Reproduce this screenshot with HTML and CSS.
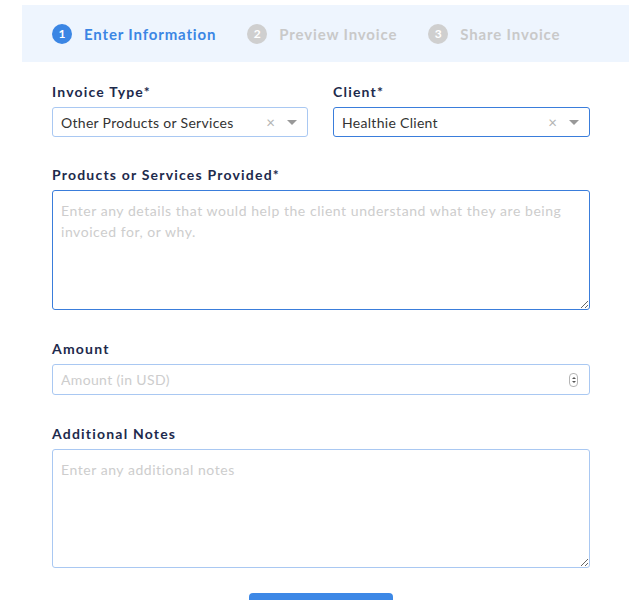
FILE: index.html
```html
<!DOCTYPE html>
<html>
<head>
<meta charset="utf-8">
<link rel="stylesheet" href="styles.css">
</head>
<body>
<div class="steps">
  <div class="step active"><span class="num">1</span><span class="step-label">Enter Information</span></div>
  <div class="step"><span class="num">2</span><span class="step-label">Preview Invoice</span></div>
  <div class="step"><span class="num">3</span><span class="step-label">Share Invoice</span></div>
</div>
<form class="form">
  <div class="row">
    <div class="field">
      <label class="label">Invoice Type*</label>
      <div class="select">
        <span class="select-value">Other Products or Services</span>
        <span class="clear">×</span>
        <span class="caret"></span>
      </div>
    </div>
    <div class="field">
      <label class="label">Client*</label>
      <div class="select focused">
        <span class="select-value">Healthie Client</span>
        <span class="clear">×</span>
        <span class="caret"></span>
      </div>
    </div>
  </div>
  <div class="field gap">
    <label class="label">Products or Services Provided*</label>
    <textarea class="textarea focused tall" placeholder="Enter any details that would help the client understand what they are being invoiced for, or why."></textarea>
  </div>
  <div class="field gap2">
    <label class="label">Amount</label>
    <div class="number">
      <input class="number-input" type="text" placeholder="Amount (in USD)">
      <span class="spinner"><span class="up"></span><span class="down"></span></span>
    </div>
  </div>
  <div class="field gap2">
    <label class="label">Additional Notes</label>
    <textarea class="textarea notes" placeholder="Enter any additional notes"></textarea>
  </div>
  <div class="actions">
    <button class="btn" type="button"></button>
  </div>
</form>
</body>
</html>
```
FILE: styles.css
```css
* { box-sizing: border-box; }
body {
  margin: 0;
  font-family: Lato, "Open Sans", sans-serif;
  background: #fff;
  overflow: hidden;
}
.steps {
  margin: 5px 0 0 22px;
  height: 57px;
  background: #eef5fe;
  display: flex;
  align-items: center;
  padding-left: 30px;
  gap: 31px;
}
.step {
  display: flex;
  align-items: center;
  gap: 12px;
}
.num {
  width: 20px;
  height: 20px;
  border-radius: 50%;
  background: #cfcfcf;
  color: #fff;
  font-size: 12px;
  font-weight: 700;
  display: flex;
  align-items: center;
  justify-content: center;
}
.step-label {
  font-size: 15px;
  font-weight: 700;
  color: #c9c9c9;
  letter-spacing: 0.85px;
}
.step.active .num { background: #3b86e4; }
.step.active .step-label { color: #3b86e4; }

.form {
  padding: 21px 39px 0 52px;
}
.row {
  display: grid;
  grid-template-columns: 256px 257px;
  gap: 25px;
}
.field {
  display: flex;
  flex-direction: column;
}
.gap { margin-top: 29px; }
.gap2 { margin-top: 30px; }
.label {
  font-size: 14px;
  font-weight: 700;
  line-height: 18px;
  color: #1d2a4c;
  letter-spacing: 1.2px;
  margin-bottom: 6px;
}
.select {
  height: 30px;
  border: 1px solid #a9c8f2;
  border-radius: 3px;
  display: flex;
  align-items: center;
  padding: 0 10px 0 8px;
}
.select.focused { border-color: #3a7ddb; }
.select-value {
  flex: 1;
  font-size: 14px;
  color: #333;
  letter-spacing: 0.3px;
}
.clear {
  color: #b3b3b3;
  font-size: 15px;
  margin-right: 12px;
  line-height: 1;
}
.caret {
  width: 0;
  height: 0;
  border-left: 5px solid transparent;
  border-right: 5px solid transparent;
  border-top: 5px solid #999;
}
.textarea {
  display: block;
  width: 100%;
  border: 1px solid #a9c8f2;
  border-radius: 3px;
  padding: 9px 8px 10px;
  font-family: Lato, "Open Sans", sans-serif;
  font-size: 14px;
  line-height: 21px;
  letter-spacing: 0.55px;
  color: #333;
  outline: none;
  resize: vertical;
}
.textarea.focused { border-color: #3a7ddb; }
.textarea::placeholder, .number-input::placeholder { color: #cdcdcd; opacity: 1; }
.tall { height: 120px; }
.notes { height: 119px; }
.number {
  height: 31px;
  border: 1px solid #a9c8f2;
  border-radius: 3px;
  display: flex;
  align-items: center;
  padding: 0 11px 0 8px;
}
.number-input {
  flex: 1;
  border: none;
  outline: none;
  padding: 0;
  font-family: Lato, "Open Sans", sans-serif;
  font-size: 14px;
  letter-spacing: 0.35px;
  color: #333;
  background: transparent;
}
.spinner {
  width: 9px;
  height: 14px;
  border: 1px solid #b5b5b5;
  border-radius: 4px;
  display: flex;
  flex-direction: column;
  align-items: center;
  justify-content: center;
  gap: 2px;
}
.up, .down {
  width: 0;
  height: 0;
  border-left: 2px solid transparent;
  border-right: 2px solid transparent;
}
.up { border-bottom: 2px solid #555; }
.down { border-top: 2px solid #555; }
.actions {
  display: flex;
  justify-content: center;
  margin-top: 25px;
}
.btn {
  width: 144px;
  height: 40px;
  border: none;
  border-radius: 4px;
  background: #3d88e6;
}
```
